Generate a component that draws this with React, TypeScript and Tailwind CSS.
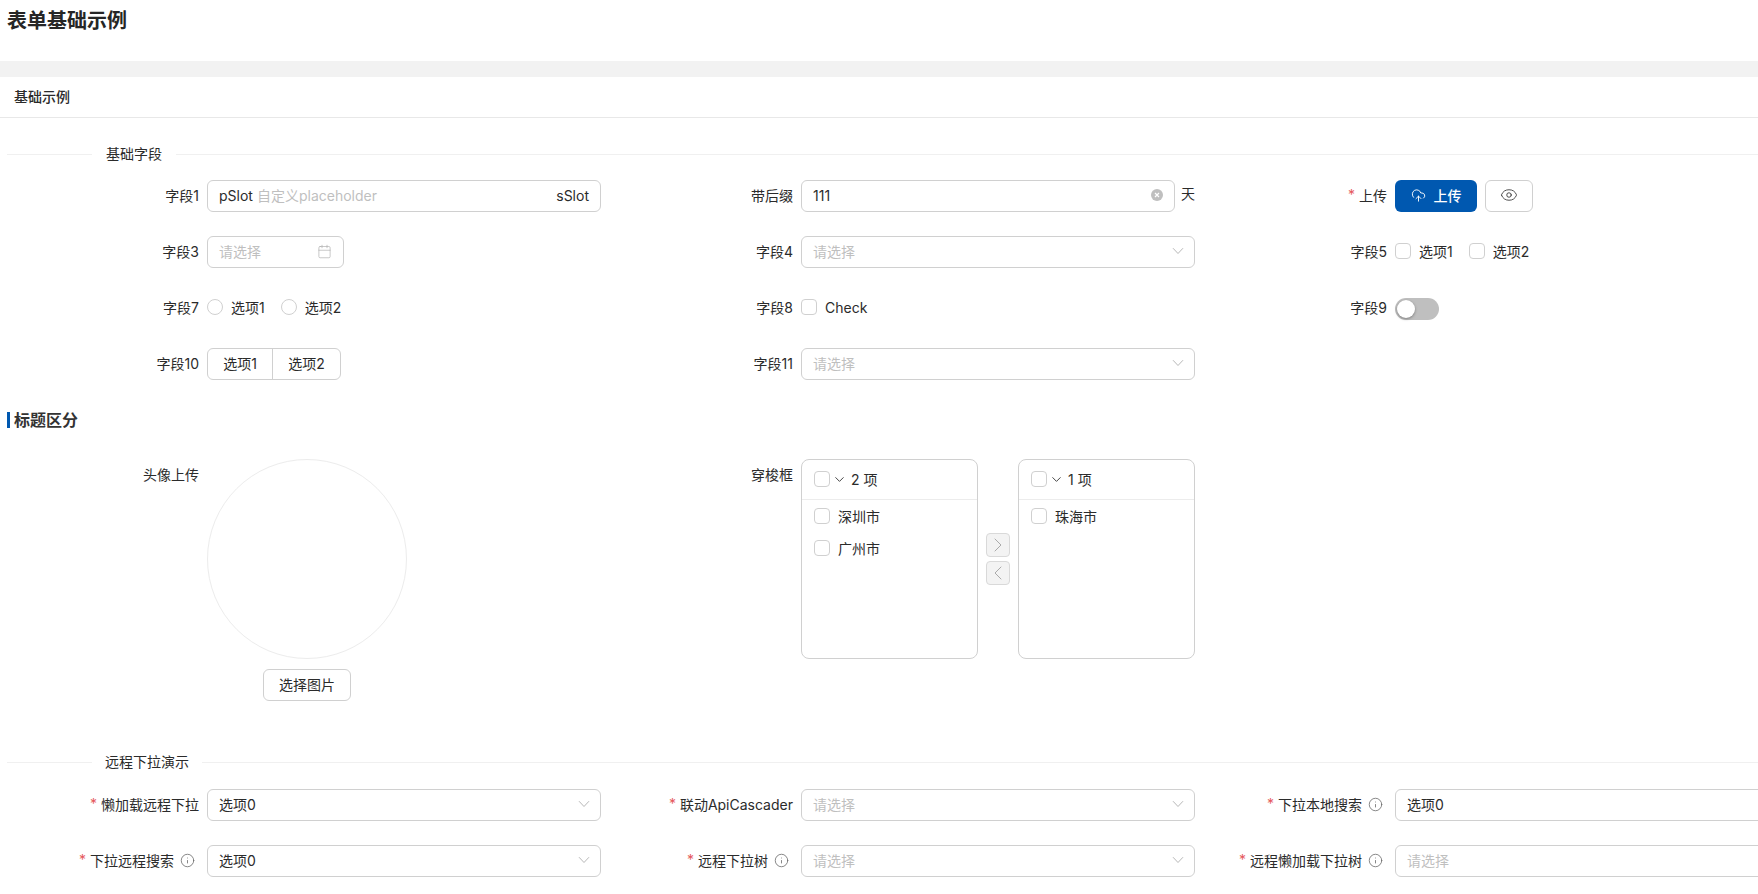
import { ReactNode } from 'react';
import { Calendar, ChevronDown, ChevronLeft, ChevronRight, CloudUpload, Eye, Info } from 'lucide-react';

const FieldLabel = ({ text, required, tip }: { text: string; required?: boolean; tip?: boolean }) => (
  <div className="w-[192px] h-8 pb-[2px] flex items-center justify-end shrink-0 whitespace-nowrap">
    {required && <span className="text-[#e5585c] mr-[4px] text-[14px] leading-none">*</span>}
    <span>{text}</span>
    {tip && <Info size={15} strokeWidth={1.25} className="text-[#666] ml-[6px] mr-[4px]" />}
  </div>
);

const Item = ({ label, required, tip, children }: { label: string; required?: boolean; tip?: boolean; children: ReactNode }) => (
  <div className="flex items-start gap-2">
    <FieldLabel text={label} required={required} tip={tip} />
    {children}
  </div>
);

const Box = ({ className = 'w-[394px]', children }: { className?: string; children: ReactNode }) => (
  <div className={`h-8 pl-[11px] pr-[11px] pb-[2px] flex items-center border border-[#d0d0d0] rounded-md bg-white shrink-0 ${className}`}>{children}</div>
);

const SelectArrow = () => (
  <svg width="12" height="8" viewBox="0 0 12 8" fill="none" className="shrink-0 -mr-[1px]">
    <path d="M1 1.2l5 5.3 5-5.3" stroke="#b8b8b8" strokeWidth="1" />
  </svg>
);

const Select = ({ value }: { value?: string }) => (
  <Box>
    <span className={value ? 'flex-1' : 'flex-1 text-[#bfbfbf]'}>{value ?? '请选择'}</span>
    <SelectArrow />
  </Box>
);

const Check = () => <span className="block size-4 rounded-[4px] border border-[#d0d0d0] bg-white shrink-0" />;

const Radio = () => <span className="block size-4 rounded-full border border-[#d0d0d0] bg-white shrink-0" />;

const Divider = ({ title, gap }: { title: string; gap: string }) => (
  <div className="flex items-center h-5">
    <div className="w-[85px] h-px bg-[#f0f0f0]" />
    <span className={`${gap} pb-[2px]`}>{title}</span>
    <div className="flex-1 h-px bg-[#f0f0f0]" />
  </div>
);

const TransferPanel = ({ count, items }: { count: number; items: string[] }) => (
  <div className="w-[177px] h-[200px] border border-[#d0d0d0] rounded-lg">
    <div className="h-[40px] pb-[1px] border-b border-[#ececec] flex items-center pl-[12px]">
      <Check />
      <ChevronDown size={15} strokeWidth={1.4} className="ml-[2px] mr-[4px]" />
      <span>{count} 项</span>
    </div>
    <div>
      {items.map((item) => (
        <div key={item} className="h-8 flex items-center pl-[12px] gap-[8px]">
          <Check />
          <span>{item}</span>
        </div>
      ))}
    </div>
  </div>
);

const MoveButton = ({ children }: { children: ReactNode }) => (
  <div className="size-6 flex items-center justify-center rounded-[4px] border border-[#d9d9d9] bg-[#f3f3f3] text-[#aaa]">{children}</div>
);

const ClearIcon = () => (
  <svg width="12" height="12" viewBox="0 0 12 12" className="mb-[1px]">
    <circle cx="6" cy="6" r="6" fill="#bfbfbf" />
    <path d="M4 4l4 4M8 4l-4 4" stroke="#fff" strokeWidth="1.2" />
  </svg>
);

export default function App() {
  return (
    <div className="h-[894px] w-full overflow-hidden bg-white text-[14px] text-[#2b2b2b] font-['Inter','Noto_Sans_CJK_SC',sans-serif]">
      <div className="h-[61px] pl-[7px] pt-[7px]">
        <h1 className="text-[20px] leading-7 font-semibold text-[#262626]">表单基础示例</h1>
      </div>
      <div className="h-4 bg-[#f2f2f2]" />
      <div className="h-[41px] pl-[14px] pb-[2px] flex items-center border-b border-[#e8e8e8] font-medium">基础示例</div>

      <div className="pl-[7px] w-[1789px]">
        <div className="pt-[26px]">
          <Divider title="基础字段" gap="px-[14px]" />
        </div>

        <div className="mt-4 grid grid-cols-[repeat(3,594px)] gap-y-6">
          <Item label="字段1">
            <Box>
              <span>pSlot</span>
              <span className="ml-[4px] flex-1 text-[#bfbfbf]">自定义placeholder</span>
              <span>sSlot</span>
            </Box>
          </Item>
          <Item label="带后缀">
            <Box className="w-[374px]">
              <span className="flex-1">111</span>
              <ClearIcon />
            </Box>
            <span className="h-8 leading-7 -ml-[2px]">天</span>
          </Item>
          <Item label="上传" required>
            <div className="h-8 w-[82px] pb-[1px] rounded-md bg-[#0058b0] text-white font-medium flex items-center justify-center gap-[8px] shrink-0">
              <CloudUpload size={15} strokeWidth={1.5} />
              <span>上传</span>
            </div>
            <div className="h-8 w-12 rounded-md border border-[#d0d0d0] flex items-center justify-center shrink-0">
              <Eye size={18} strokeWidth={1.1} className="mb-[3px]" />
            </div>
          </Item>

          <Item label="字段3">
            <Box className="w-[137px]">
              <span className="flex-1 text-[#bfbfbf]">请选择</span>
              <Calendar size={15} strokeWidth={1} className="text-[#a8a8a8]" />
            </Box>
          </Item>
          <Item label="字段4">
            <Select />
          </Item>
          <Item label="字段5">
            <div className="h-8 pb-[2px] flex items-center">
              <Check />
              <span className="ml-[8px] mr-[16px]">选项1</span>
              <Check />
              <span className="ml-[8px]">选项2</span>
            </div>
          </Item>

          <Item label="字段7">
            <div className="h-8 pb-[2px] flex items-center">
              <Radio />
              <span className="ml-[8px] mr-[16px]">选项1</span>
              <Radio />
              <span className="ml-[8px]">选项2</span>
            </div>
          </Item>
          <Item label="字段8">
            <div className="h-8 pb-[2px] flex items-center gap-2">
              <Check />
              <span>Check</span>
            </div>
          </Item>
          <Item label="字段9">
            <div className="h-8 flex items-center">
              <div className="w-[44px] h-[22px] mt-[2px] rounded-full bg-[#bfbfbf] p-[2px]">
                <div className="size-[18px] rounded-full bg-white shadow-[0_1px_3px_rgba(0,0,0,0.35)]" />
              </div>
            </div>
          </Item>

          <Item label="字段10">
            <div className="h-8 flex border border-[#d0d0d0] rounded-md">
              <span className="w-[65px] pb-[2px] flex items-center justify-center border-r border-[#d0d0d0]">选项1</span>
              <span className="w-[67px] pb-[2px] flex items-center justify-center">选项2</span>
            </div>
          </Item>
          <Item label="字段11">
            <Select />
          </Item>
        </div>

        <div className="mt-[32px] h-4 flex items-center border-l-[3px] border-[#0058b0] pl-[4px] text-[16px] font-semibold text-[#333]">标题区分</div>

        <div className="mt-[31px] grid grid-cols-[repeat(3,594px)]">
          <div className="flex items-start gap-2">
            <FieldLabel text="头像上传" />
            <div className="w-[200px] flex flex-col items-center">
              <div className="size-[200px] rounded-full border border-[#ececec]" />
              <div className="mt-[10px] w-[88px] h-8 pb-[1px] flex items-center justify-center border border-[#d0d0d0] rounded-md">选择图片</div>
            </div>
          </div>
          <div className="flex items-start gap-2">
            <FieldLabel text="穿梭框" />
            <div className="flex items-center">
              <TransferPanel count={2} items={['深圳市', '广州市']} />
              <div className="mx-[8px] flex flex-col gap-[4px]">
                <MoveButton>
                  <ChevronRight size={24} strokeWidth={1} className="shrink-0" />
                </MoveButton>
                <MoveButton>
                  <ChevronLeft size={24} strokeWidth={1} className="shrink-0" />
                </MoveButton>
              </div>
              <TransferPanel count={1} items={['珠海市']} />
            </div>
          </div>
        </div>

        <div className="mt-[51px]">
          <Divider title="远程下拉演示" gap="px-[13px]" />
        </div>

        <div className="mt-[17px] grid grid-cols-[repeat(3,594px)] gap-y-6">
          <Item label="懒加载远程下拉" required>
            <Select value="选项0" />
          </Item>
          <Item label="联动ApiCascader" required>
            <Select />
          </Item>
          <Item label="下拉本地搜索" required tip>
            <Select value="选项0" />
          </Item>
          <Item label="下拉远程搜索" required tip>
            <Select value="选项0" />
          </Item>
          <Item label="远程下拉树" required tip>
            <Select />
          </Item>
          <Item label="远程懒加载下拉树" required tip>
            <Select />
          </Item>
        </div>
      </div>
    </div>
  );
}
